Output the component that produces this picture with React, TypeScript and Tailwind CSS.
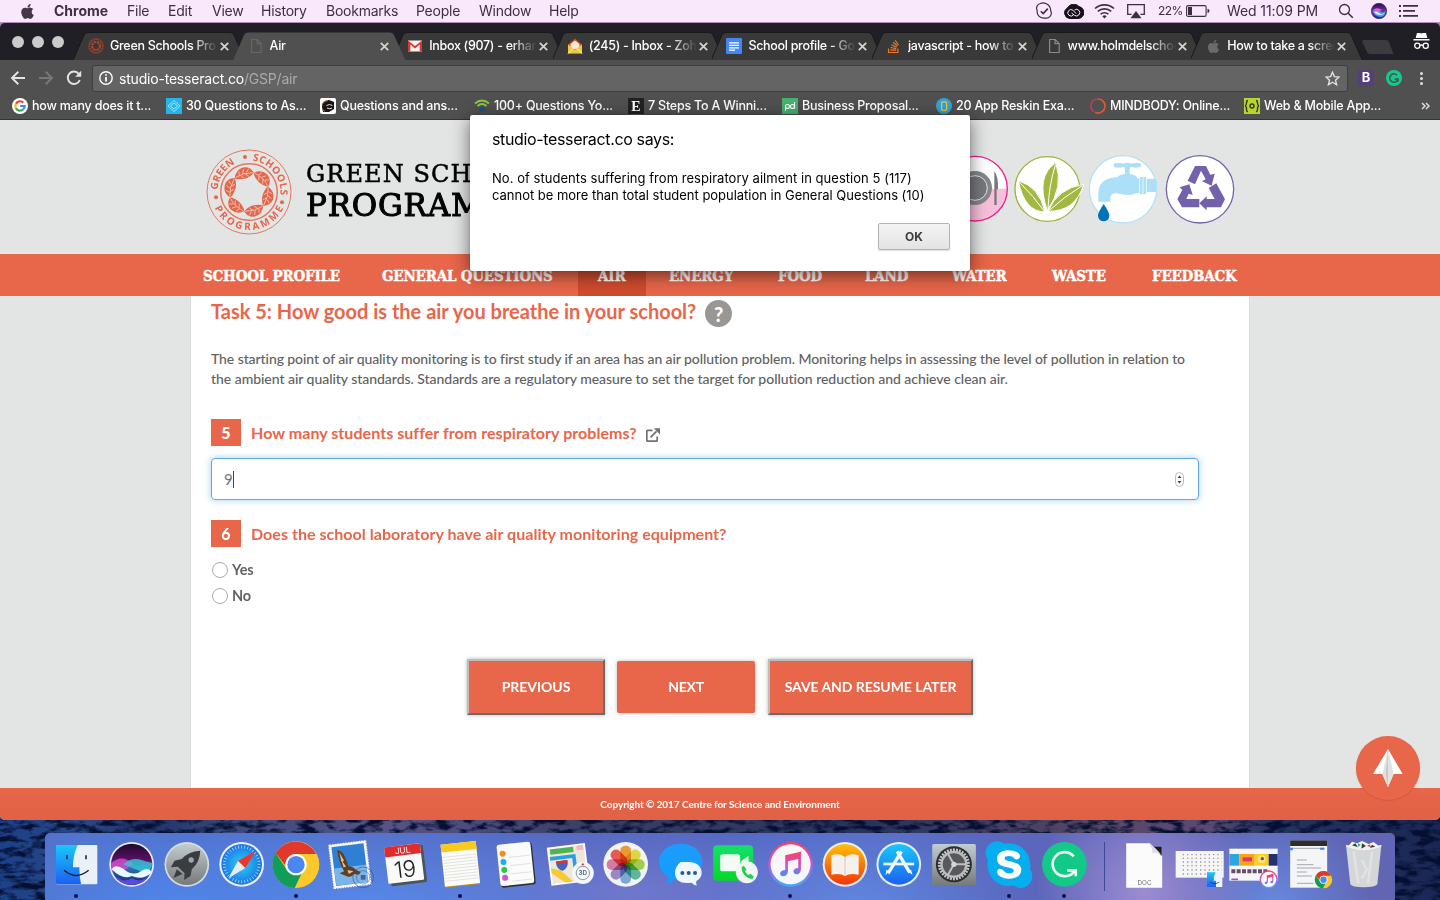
import React from "react";
import { FaApple, FaStackOverflow, FaSkype } from "react-icons/fa";

type Kids = { children?: React.ReactNode };

/* ---------- menu bar ---------- */

const menus: [string, string][] = [
  ["File", "w-[41px]"],
  ["Edit", "w-[44px]"],
  ["View", "w-[49px]"],
  ["History", "w-[65px]"],
  ["Bookmarks", "w-[90px]"],
  ["People", "w-[63px]"],
  ["Window", "w-[70px]"],
  ["Help", "w-[50px]"],
];

function MenuBar() {
  return (
    <div className="flex h-[23px] shrink-0 items-center border-b border-[#b48fbd] bg-[#f9e7fb] text-[14px] leading-[22px] text-[#3d2f41]">
      <div className="flex w-[54px] justify-center">
        <FaApple className="size-[17px] text-[#46364a]" />
      </div>
      <span className="w-[73px] font-bold">Chrome</span>
      {menus.map(([m, w]) => (
        <span key={m} className={`${w} whitespace-nowrap tracking-[-0.25px]`}>{m}</span>
      ))}
      <div className="ml-auto flex h-full items-center">
        <div className="flex w-[30px] justify-center">
          <svg width="18" height="18" viewBox="0 0 18 18" fill="none" stroke="#3d2f41" strokeWidth="1.2">
            <path d="M5.500 1.500C8-.2 15.500 1.600 15.800 9c1.800 4-1.800 8-5.800 7C4 16.600 1.600 12 2.200 8.600 .8 5.800 2 2 5.500 1.500Z" />
            <path d="M5.800 9.200l2.400 2.400 4.600-5" strokeWidth="1.600" />
          </svg>
        </div>
        <div className="flex w-[30px] justify-center">
          <svg width="20" height="15" viewBox="0 0 20 15">
            <path d="M6 14.500A5.600 5.600 0 0 1 3.500 4 7 7 0 0 1 15 2.600 6 6 0 0 1 14 14.500Z" fill="#17101a" stroke="#17101a" strokeWidth="1" />
            <g fill="none" stroke="#f9e7fb" strokeWidth="1">
              <path d="M9.500 10.800A3.200 3.200 0 1 1 9 6.300L12 9.500M7.500 9L10.500 11.300A3.300 3.300 0 1 0 10.500 6" />
            </g>
          </svg>
        </div>
        <div className="flex w-[30px] justify-center">
          <svg width="21" height="16" viewBox="0 0 21 16" fill="none" stroke="#3d2f41" strokeWidth="1.700">
            <path d="M1 5.500a14 14 0 0 1 19 0M3.800 8.400a10 10 0 0 1 13.400 0M6.600 11.200a6 6 0 0 1 7.800 0" />
            <path d="M8.300 13.200a3.500 3.500 0 0 1 4.400 0L10.500 15.500Z" fill="#3d2f41" stroke="none" />
          </svg>
        </div>
        <div className="flex w-[39px] justify-center pr-[5px]">
          <svg width="18" height="15" viewBox="0 0 18 15">
            <path d="M4.500 10.300H.7V.7h16.600v9.600h-3.800" fill="none" stroke="#3d2f41" strokeWidth="1.300" />
            <path d="M9 7l5.500 7.300h-11Z" fill="#3d2f41" />
          </svg>
        </div>
        <span className="w-[28px] text-[12px] tracking-[-0.6px]">22%</span>
        <svg width="24" height="14" viewBox="0 0 24 14" className="mr-[17px]">
          <rect x=".6" y="1.600" width="19.500" height="10.800" rx="1.500" fill="none" stroke="#3d2f41" strokeWidth="1.100" />
          <rect x="2" y="3" width="4" height="8" fill="#3d2f41" />
          <path d="M21.500 4.800q2 .6 2 2.200t-2 2.200Z" fill="#3d2f41" />
        </svg>
        <span className="w-[111px] whitespace-nowrap tracking-[-0.1px]">Wed 11:09 PM</span>
        <svg width="16" height="16" viewBox="0 0 16 16" fill="none" stroke="#3d2f41" className="mr-[17px]">
          <circle cx="6.500" cy="6.500" r="5" strokeWidth="1.300" />
          <path d="M10.200 10.200l4.600 4.600" strokeWidth="1.600" />
        </svg>
        <svg width="16" height="16" viewBox="0 0 16 16" className="mr-[12px]">
          <defs>
            <linearGradient id="siriMini" x1="0" y1="0" x2="0" y2="1">
              <stop offset="0" stopColor="#251049" />
              <stop offset=".5" stopColor="#7a2bb0" />
              <stop offset="1" stopColor="#1b2f9a" />
            </linearGradient>
          </defs>
          <circle cx="8" cy="8" r="7.700" fill="url(#siriMini)" stroke="#2c1c3c" strokeWidth=".6" />
          <path d="M1.500 8q4-3 7.500 0t5.500-.5q0 6-5 6.500Q3 13 1.500 8Z" fill="#38a7f4" />
          <path d="M3 9q3-1.500 5 1t6-.5q-2 3-5.500 2.500T3 9Z" fill="#f3eaff" />
          <path d="M2 7q4-3.500 9 0-4 2-9 0Z" fill="#e85ad0" />
        </svg>
        <svg width="19" height="14" viewBox="0 0 19 14" className="mr-[22px]" fill="#3d2f41">
          <path d="M0 1h2v2H0zM4 1h15v1.800H4zM0 6h2v2H0zM4 6h12v1.800H4zM0 11h2v2H0zM4 11h15v1.800H4z" />
        </svg>
      </div>
    </div>
  );
}

/* ---------- tabs ---------- */

const FileGlyph = ({ c }: { c: string }) => (
  <svg width="16" height="16" viewBox="0 0 16 16" fill="none" stroke={c} strokeWidth="1.200">
    <path d="M3.600 1.500h5.600l4 4v9H3.600ZM9 1.500v4.200h4.200" />
  </svg>
);

const Seal = () => (
  <svg width="16" height="16" viewBox="0 0 16 16" fill="none" stroke="#a6452f">
    <circle cx="8" cy="8" r="6.800" strokeWidth="1.700" strokeDasharray="1.300 .7" />
    <circle cx="8" cy="8" r="4" strokeWidth="2.200" strokeDasharray="2.600 .6" />
  </svg>
);

const tabs: { t: string; icon: React.ReactNode }[] = [
  { t: "Green Schools Pro", icon: <Seal /> },
  { t: "Air", icon: <FileGlyph c="#666" /> },
  {
    t: "Inbox (907) - erhar",
    icon: (
      <svg width="16" height="16" viewBox="0 0 16 16">
        <path d="M1 2.500h14v11H1z" fill="#f2f2f2" />
        <path d="M1 13.500v-11l7 5.500 7-5.500v11h-2.300V6.500L8 10.500 3.300 6.500v7Z" fill="#d6392e" />
      </svg>
    ),
  },
  {
    t: "(245) - Inbox - Zoh",
    icon: (
      <svg width="16" height="16" viewBox="0 0 16 16">
        <path d="M1 6.500L8 .5l7 6v9H1Z" fill="#c94f10" />
        <path d="M3.500 6L8 2.500 12.500 6v5h-9Z" fill="#fbe9d8" />
        <path d="M1 6.500l7 5.200 7-5.200v9H1Z" fill="#f1c83c" />
        <path d="M1 15.500l5-5M15 15.500l-5-5" stroke="#fff3bd" />
      </svg>
    ),
  },
  {
    t: "School profile - Go",
    icon: (
      <svg width="16" height="16" viewBox="0 0 16 16">
        <rect width="16" height="16" rx="1" fill="#4486f4" />
        <path d="M3 4.800h10M3 7.300h10M3 9.800h10M3 12.100h6" stroke="#fff" strokeWidth="1.300" />
      </svg>
    ),
  },
  { t: "javascript - how to", icon: <FaStackOverflow className="size-[15px] text-[#e87a2c]" /> },
  { t: "www.holmdelschoo", icon: <FileGlyph c="#8a8a8a" /> },
  { t: "How to take a scree", icon: <FaApple className="size-[15px] text-[#6b6b6b]" /> },
];

function TabStrip() {
  return (
    <div className="flex h-[37px] shrink-0 items-end rounded-t-[5px] bg-[#211f26]">
      <div className="flex h-full w-[74px] items-center gap-[8px] pl-[12px]">
        <i className="size-[12px] rounded-full bg-[#cbcbcb]" />
        <i className="size-[12px] rounded-full bg-[#cbcbcb]" />
        <i className="size-[12px] rounded-full bg-[#cbcbcb]" />
      </div>
      {tabs.map(({ t, icon }, i) => (
        <div key={t} className={`relative flex h-[28px] w-[159.600px] shrink-0 items-center pl-[14px] ${i === 1 ? "z-10" : ""}`}>
          <svg className="absolute top-0 left-0" width="172" height="28" viewBox="0 0 172 28">
            <path
              d="M-1 28.500L10 3Q11 .5 14 .5H156Q159 .5 160 3L171.500 28.500Z"
              fill={i === 1 ? "#505050" : "#393939"}
              stroke="#19181b"
              strokeWidth={i === 1 ? 0 : 1}
            />
          </svg>
          <span className="relative flex size-[16px] items-center justify-center">{icon}</span>
          <span className="relative ml-[6px] w-[108px] text-[12.500px] font-medium tracking-[-0.300px] whitespace-nowrap text-white [mask-image:linear-gradient(90deg,#000_76%,transparent_100%)]">
            {t}
          </span>
          <svg className="relative ml-[2px]" width="9" height="9" viewBox="0 0 9 9" stroke="#d6d6d6" strokeWidth="1.700">
            <path d="M.8.800l7.400 7.400M8.200.800L.8 8.200" />
          </svg>
        </div>
      ))}
      <svg width="32" height="14" viewBox="0 0 32 14" className="mb-[6px] ml-[11px]">
        <path d="M0 1.500Q0 0 2 0h22q2 0 3 2l4.500 12H8q-2 0-3-2Z" fill="#3c3b3e" />
      </svg>
      <svg width="17" height="17" viewBox="0 0 17 17" className="mb-[10px] ml-auto mr-[10px]">
        <path d="M4 0h3l1.500.6L10 0h3l1.300 5H2.700ZM.5 6h16v1.500H.5Z" fill="#fff" />
        <g fill="none" stroke="#fff" strokeWidth="1.300">
          <circle cx="4.300" cy="12.800" r="2.600" />
          <circle cx="12.700" cy="12.800" r="2.600" />
          <path d="M6.900 12.500q1.600-1 3.200 0" />
        </g>
      </svg>
    </div>
  );
}

/* ---------- toolbar and bookmarks ---------- */

function Toolbar() {
  return (
    <div className="flex h-[36px] shrink-0 items-center bg-[#505050]">
      <svg width="16" height="16" viewBox="0 0 16 16" className="ml-[10px]" fill="none" stroke="#e4e4e4" strokeWidth="1.900">
        <path d="M15 8H2.500M8.300 1.800L2 8l6.300 6.200" />
      </svg>
      <svg width="16" height="16" viewBox="0 0 16 16" className="ml-[12px]" fill="none" stroke="#787878" strokeWidth="1.900">
        <path d="M1 8h12.500M7.700 1.800L14 8l-6.300 6.200" />
      </svg>
      <svg width="16" height="16" viewBox="0 0 16 16" className="ml-[12px]" fill="none" stroke="#e4e4e4" strokeWidth="1.900">
        <path d="M13.800 10a6.200 6.200 0 1 1-1-6.200" />
        <path d="M15.200.8v6H9.200Z" fill="#e4e4e4" stroke="none" />
      </svg>
      <div className="ml-[10px] flex h-[27px] w-[1256px] items-center rounded-[3px] border border-[#3f3f3f] bg-[#646464] pl-[6px]">
        <svg width="14" height="14" viewBox="0 0 14 14" fill="none" stroke="#fff">
          <circle cx="7" cy="7" r="6.200" strokeWidth="1.400" />
          <path d="M7 6v4.500M7 3.200v1.600" strokeWidth="1.800" />
        </svg>
        <span className="ml-[6px] text-[14px] tracking-[-0.200px] text-white">
          studio-tesseract.co<span className="text-[#ababab]">/GSP/air</span>
        </span>
        <svg width="15" height="15" viewBox="0 0 24 24" className="ml-auto mr-[7px]" fill="none" stroke="#e2e2e2" strokeWidth="2.200">
          <path d="M12 2l3 7 7.500.6-5.700 5 1.800 7.400L12 18l-6.600 4 1.800-7.400-5.700-5L9 9Z" />
        </svg>
      </div>
      <span className="ml-[10px] flex size-[16px] items-center justify-center rounded-[2px] bg-[#563d7c] text-[13px] font-bold text-white">B</span>
      <svg width="16" height="16" viewBox="0 0 16 16" className="ml-[12px]">
        <circle cx="8" cy="8" r="8" fill="#15c990" />
        <path d="M11 5.200A4.200 4.200 0 1 0 12 9H8.600M12 8.800v2.900" fill="none" stroke="#43534d" strokeWidth="1.500" />
      </svg>
      <div className="ml-[18px] flex w-[4px] flex-col gap-[2px]">
        <i className="size-[3px] rounded-full bg-[#e0e0e0]" />
        <i className="size-[3px] rounded-full bg-[#e0e0e0]" />
        <i className="size-[3px] rounded-full bg-[#e0e0e0]" />
      </div>
    </div>
  );
}

const S16 = ({ children }: Kids) => (
  <svg width="16" height="16" viewBox="0 0 16 16" className="shrink-0">{children}</svg>
);

const bookmarks: [string, React.ReactNode][] = [
  ["how many does it t...", (
    <S16>
      <circle cx="8" cy="8" r="8" fill="#fff" />
      <g fill="none" strokeWidth="2.200">
        <path d="M11.300 4.600A4.700 4.700 0 0 0 3.900 5.700" stroke="#ea4335" />
        <path d="M3.900 5.700a4.700 4.700 0 0 0 0 4.600" stroke="#fbbc05" />
        <path d="M3.900 10.300a4.700 4.700 0 0 0 7.200 1.200" stroke="#34a853" />
        <path d="M11.100 11.500A4.700 4.700 0 0 0 12.700 8H8.200" stroke="#4285f4" />
      </g>
    </S16>
  )],
  ["30 Questions to As...", (
    <S16>
      <rect width="16" height="16" fill="#25b5e9" />
      <path d="M8 2.500l6 5.500-6 5.500L2 8ZM8 5l3.500 3L8 11 4.500 8Z" fill="none" stroke="#a9e6fb" strokeWidth=".9" />
    </S16>
  )],
  ["Questions and ans...", (
    <S16>
      <rect width="16" height="16" rx="2" fill="#fff" />
      <path d="M2 9Q2 2 9 2l5 2v7l-5 3H3Z" fill="#151515" />
      <path d="M2 6.500q2-4 6-4M2 11l3 2.500" stroke="#e26c1c" fill="none" />
      <path d="M6.500 7.500q3-2 6 0M7 10q3 1.500 5 0" stroke="#ddd" fill="none" />
    </S16>
  )],
  ["100+ Questions Yo...", (
    <S16>
      <path d="M1 5.500q7-6 14 0M3.500 8q4.500-4 9 0" fill="none" stroke="#8cc63f" strokeWidth="2" />
      <rect x="5.500" y="9" width="5" height="4.500" fill="#1d4f91" />
    </S16>
  )],
  ["7 Steps To A Winni...", (
    <S16>
      <rect width="16" height="16" fill="#222" />
      <text x="8" y="13" textAnchor="middle" fill="#fff" fontSize="14" fontWeight="700" fontFamily="Liberation Serif, serif">E</text>
    </S16>
  )],
  ["Business Proposal...", (
    <S16>
      <rect width="16" height="16" fill="#46b36e" />
      <g fill="none" stroke="#fff" strokeWidth="1.100">
        <circle cx="5.500" cy="8.500" r="2" />
        <path d="M3.500 8.500v4.500M12.500 4v6.500" />
        <circle cx="10.500" cy="8.500" r="2" />
      </g>
    </S16>
  )],
  ["20 App Reskin Exa...", (
    <S16>
      <circle cx="8" cy="8" r="8" fill="#37a3cd" />
      <rect x="5.600" y="3.800" width="5" height="8.500" rx="1" fill="none" stroke="#e9c84a" strokeWidth="1.300" />
    </S16>
  )],
  ["MINDBODY: Online...", (
    <S16>
      <path d="M8 1A7 7 0 0 0 4 13.800" fill="none" stroke="#b83a6b" strokeWidth="1.700" />
      <path d="M8 1a7 7 0 1 1-3 13.300" fill="none" stroke="#e4572e" strokeWidth="1.700" />
    </S16>
  )],
  ["Web & Mobile App...", (
    <S16>
      <rect width="16" height="16" fill="#b9d531" />
      <g fill="none" stroke="#333b12" strokeWidth="1.400">
        <circle cx="8" cy="8" r="2" />
        <path d="M4 2.500Q2.500 2.500 2.500 5T1 8q1.500 0 1.500 3T4 13.500M12 2.500q1.500 0 1.500 2.500T15 8q-1.500 0-1.500 3T12 13.500" />
      </g>
    </S16>
  )],
];

function Bookmarks() {
  return (
    <div className="flex h-[24px] shrink-0 items-center border-b border-[#343434] bg-[#505050] pl-[12px]">
      {bookmarks.map(([t, icon]) => (
        <div key={t} className="flex w-[154px] shrink-0 items-center gap-[4px] pb-[3px]">
          {icon}
          <span className="text-[12.500px] font-medium tracking-[-0.220px] whitespace-nowrap text-white">{t}</span>
        </div>
      ))}
      <svg width="9" height="8" viewBox="0 0 9 8" className="mb-[3px] ml-[23px]" fill="none" stroke="#ddd" strokeWidth="1.500">
        <path d="M1 1l3 3-3 3M5 1l3 3-3 3" />
      </svg>
    </div>
  );
}

/* ---------- site header ---------- */

const leafAngles = [-16, 44, 104, 164, 224, 284];

function Logo() {
  return (
    <svg width="86" height="86" viewBox="-43 -43 86 86" className="shrink-0">
      <defs>
        <path id="arcTop" d="M-31.500 0A31.500 31.500 0 0 1 31.500 0A31.500 31.500 0 0 1 -31.500 0" />
        <path id="arcTop2" d="M0 -31.500A31.500 31.500 0 0 1 0 31.500" />
        <path id="arcBottom" d="M-38 0A38 38 0 0 0 38 0" />
      </defs>
      <g fill="none" stroke="#e3795f">
        <circle r="42" strokeWidth="1" />
        <circle r="28.300" strokeWidth="1.500" />
      </g>
      <g fill="#e4674b" fontFamily="Open Sans, sans-serif" fontWeight="700" fontSize="10">
        <text><textPath href="#arcTop" startOffset="2" textLength="33">GREEN</textPath></text>
        <text><textPath href="#arcTop2" startOffset="3.500" textLength="49">SCHOOLS</textPath></text>
        <text><textPath href="#arcBottom" startOffset="16.500" textLength="86">PROGRAMME</textPath></text>
      </g>
      <g fill="#e4674b">
        <circle cx="-4" cy="-35" r="2" />
        <circle cx="-33" cy="5.300" r="2" />
        <circle cx="33" cy="10.300" r="2" />
      </g>
      {leafAngles.map((a) => (
        <g key={a} transform={`rotate(${a}) translate(0 -19.500)`}>
          <path d="M-10 2.500Q-7-5.500 1-5.800 8-5 10 2.200 5 6 -1 5.500 -7 5-10 2.500Z" fill="#e4674b" />
          <path d="M-9 2Q0-1 9 2M-5 1l1-4M-1 0l2-4M3 0l3-3M-4 1l3 3.500M1 .5l3 3.500" stroke="#f0c9bf" strokeWidth=".8" fill="none" />
        </g>
      ))}
    </svg>
  );
}

function HeaderIcons() {
  return (
    <div className="flex items-center">
      <svg width="70" height="70" viewBox="-62 42 210 210">
        <circle cx="43" cy="146" r="97" fill="#fff" />
        <path d="M-54 146H140A97 97 0 0 1-54 146Z" fill="#f7c0da" />
        <circle cx="43" cy="146" r="97" fill="none" stroke="#ec2290" strokeWidth="4" />
        <circle cx="43" cy="144" r="51" fill="#85868a" />
        <circle cx="43" cy="144" r="37" fill="#77787c" stroke="#e6e6e8" strokeWidth="3" />
        <path d="M101 94Q113 108 112 146l-4 3v46h-7Z" fill="#77787c" />
      </svg>
      <svg width="70" height="70" viewBox="157 42 210 210" className="ml-[3px] overflow-visible">
        <circle cx="260" cy="147" r="97" fill="#fff" stroke="#a2b440" strokeWidth="4" />
        <g fill="#a2b843" stroke="#fff" strokeWidth="3">
          <path d="M173 122Q236 140 253 216 191 215 173 122Z" />
          <path d="M285 68Q310 140 260 212 224 110 285 68Z" />
          <path d="M369 133Q345 215 262 214 290 145 369 133Z" />
        </g>
        <path d="M175 125Q220 170 252 215M284 75Q264 140 262 209M365 137Q310 170 265 212" fill="none" stroke="#fff" strokeWidth="3" />
      </svg>
      <svg width="70" height="70" viewBox="383 42 210 210" className="ml-[5px] overflow-visible">
        <circle cx="488" cy="148" r="101" fill="#fff" stroke="#b3e1f7" strokeWidth="4" />
        <path d="M462 70q-5 6 0 12 17 3 27-1 5-2 5 8v13q-18 2-22 10-57 1-58 49v24h36v-13q2-14 22-12 32 11 58-1v-47q-5-8-22-10V89q0-10 6-8 9 4 26 1 5-6 0-12-17-3-27 1-13-5-24 0-10-4-27-1Z" fill="#ace0f8" />
        <path d="M530 115h7v44h-7zM539 111h8v52h-8zM549 111h8v52h-8zM559 116h29q3 20-1 40h-28z" fill="#ace0f8" />
        <path d="M430 192Q447 217 447 227A17 17 0 0 1 413 227Q413 217 430 192Z" fill="#0072bb" />
      </svg>
      <svg width="70" height="70" viewBox="613 42 210 210" className="ml-[7px] overflow-visible">
        <circle cx="718" cy="148" r="101" fill="#fff" stroke="#7563ad" strokeWidth="4" />
        <g fill="#7361ab">
          <path d="M703 78H736L749 104 762 101 753 137 724 124 735 118 721 92 703 133 681 122Z" />
          <path d="M657 142L686 133 696 165 684 161 677 177H716V202H664L650 177 665 150Z" />
          <path d="M744 144L767 130 793 178 781 202H738V211L716 190 738 169V177H762Z" />
        </g>
      </svg>
    </div>
  );
}

const nav: [string, string][] = [
  ["SCHOOL PROFILE", "w-[179px]"],
  ["GENERAL QUESTIONS", "w-[216px]"],
  ["AIR", "w-[71px]"],
  ["ENERGY", "w-[109px]"],
  ["FOOD", "w-[87px]"],
  ["LAND", "w-[87px]"],
  ["WATER", "w-[100px]"],
  ["WASTE", "w-[100px]"],
  ["FEEDBACK", "w-[90px]"],
];

function SiteNav() {
  return (
    <nav className="flex h-[42px] shrink-0 items-center bg-[#e86649] pl-[203px] font-['DejaVu_Serif_Condensed','DejaVu_Serif',serif] text-[15px] font-bold tracking-[-0.200px] text-white [-webkit-text-stroke:0.4px_white] [font-stretch:condensed]">
      {nav.map(([t, w]) => (
        <span
          key={t}
          className={`${w} flex h-full items-center pt-[2px] whitespace-nowrap ${t === "AIR" ? "bg-linear-to-r from-[#cf4b2e] from-[48px] to-transparent to-[48px] shadow-[-20px_0_0_#cf4b2e]" : ""}`}
        >
          {t}
        </span>
      ))}
    </nav>
  );
}

/* ---------- form ---------- */

function Question({ n, children }: { n: string } & Kids) {
  return (
    <div className="flex h-[27px] items-center text-[16px] font-bold text-[#e86649]">
      <span className="mr-[10px] flex h-[27px] w-[30px] items-center justify-center bg-[#e86649] font-black text-white">{n}</span>
      {children}
    </div>
  );
}

function Radio({ children }: Kids) {
  return (
    <label className="flex h-[26px] items-center text-[14.500px] font-bold tracking-[-0.100px] text-[#636363]">
      <i className="mr-[4px] ml-[1px] size-[16px] rounded-full border border-[#a8a8a8] bg-white" />
      {children}
    </label>
  );
}

function Page() {
  return (
    <div className="relative flex h-[700px] shrink-0 flex-col overflow-hidden rounded-b-[5px] bg-[#e3e5e4]">
      <header className="flex h-[134px] shrink-0 items-center pt-[9px] pl-[205.500px]">
        <Logo />
        <div className="ml-[14.500px] w-[634px] pb-[4px] font-['DejaVu_Serif',serif] whitespace-nowrap text-black">
          <div className="text-[24px] leading-[31px] tracking-[1.100px] [-webkit-text-stroke:0.5px_black]">GREEN SCHOOLS</div>
          <div className="text-[31px] leading-[31px] tracking-[0.800px] [-webkit-text-stroke:1px_black]">PROGRAMME</div>
        </div>
        <div className="pb-[5px]"><HeaderIcons /></div>
      </header>
      <SiteNav />
      <main className="mx-auto flex w-[1060px] grow flex-col border-x border-[#d8dad9] bg-white pl-[20px] font-['Lato',sans-serif]">
        <div className="flex h-[35px] items-center text-[20px] font-bold tracking-[-0.010px] text-[#e86649]">
          <span className="pb-[5px]">Task 5: How good is the air you breathe in your school?</span>
          <span className="ml-[9px] flex size-[27px] items-center justify-center rounded-full bg-[#999693] text-[20px] font-black text-white">?</span>
        </div>
        <p className="mt-[18px] text-[14px] leading-[20px] font-medium whitespace-nowrap text-[#616161]">
          <span className="tracking-[-0.082px]">The starting point of air quality monitoring is to first study if an area has an air pollution problem. Monitoring helps in assessing the level of pollution in relation to</span>
          <br />
          <span className="tracking-[-0.040px]">the ambient air quality standards. Standards are a regulatory measure to set the target for pollution reduction and achieve clean air.</span>
        </p>
        <div className="mt-[30px]">
          <Question n="5">
            <span className="tracking-[0.055px]">How many students suffer from respiratory problems?</span>
            <svg width="14" height="14" viewBox="0 0 14 14" className="mt-[4px] ml-[9px]" fill="none" stroke="#707070" strokeWidth="1.700">
              <path d="M6.500 2.300H1.800q-1 0-1 1v8.900q0 1 1 1h8.400q1 0 1-1V8.500M4.500 9.300l6-6" />
              <path d="M7.800.2H14v6.200Z" fill="#707070" stroke="none" />
            </svg>
          </Question>
        </div>
        <div className="mt-[12px] flex h-[42px] w-[988px] items-center rounded-[4px] border border-[#5fa8e3] pr-[14px] pl-[12px] text-[15px] text-[#6c7280] shadow-[0_0_7px_rgba(102,175,233,0.6)]">
          9<i className="h-[17px] w-px bg-[#444]" />
          <svg width="9" height="15" viewBox="0 0 9 15" className="ml-auto">
            <rect x=".5" y=".5" width="8" height="14" rx="4" fill="#fff" stroke="#bbb" />
            <path d="M2.500 6L4.500 3.500 6.500 6ZM2.500 9L4.500 11.500 6.500 9Z" fill="#444" />
          </svg>
        </div>
        <div className="mt-[20px]">
          <Question n="6"><span className="tracking-[0.040px]">Does the school laboratory have air quality monitoring equipment?</span></Question>
        </div>
        <div className="mt-[10px]">
          <Radio>Yes</Radio>
          <Radio>No</Radio>
        </div>
        <div className="mt-[50px] ml-[256px] flex items-center text-[14px] font-bold tracking-[-0.060px] text-white">
          <div className="flex h-[56px] w-[138px] items-center justify-center border-2 border-t-[#bcbcbc] border-r-[#6b6b6b] border-b-[#6b6b6b] border-l-[#bcbcbc] bg-[#e86649] pb-[2px] shadow-[0_0_4px_rgba(0,0,0,0.3)]">PREVIOUS</div>
          <div className="ml-[12px] flex h-[52px] w-[138px] items-center justify-center rounded-[2px] bg-[#e86649] pb-[2px] tracking-[-0.250px] shadow-[0_0_4px_rgba(0,0,0,0.25)]">NEXT</div>
          <div className="ml-[13px] flex h-[56px] w-[205px] items-center justify-center border-2 border-t-[#bcbcbc] border-r-[#6b6b6b] border-b-[#6b6b6b] border-l-[#bcbcbc] bg-[#e86649] pb-[2px] shadow-[0_0_4px_rgba(0,0,0,0.3)]">SAVE AND RESUME LATER</div>
        </div>
      </main>
      <footer className="flex h-[32px] shrink-0 items-center justify-center bg-linear-to-b from-[#e86649] to-[#e06146] font-['Lato',sans-serif] text-[10px] font-bold tracking-[-0.060px] text-white">
        Copyright © 2017 Centre for Science and Environment
      </footer>
      <div className="absolute top-[616px] left-[1356px] flex size-[64px] items-center justify-center rounded-full bg-[#e86649] shadow-[0_1px_1px_rgba(190,80,55,0.500)]">
        <svg width="30" height="38" viewBox="849 86 90 114">
          <path d="M894 86L938 161H911L894 200 877 161H849Z" fill="#fff" />
          <path d="M894 86L911 161 894 200 877 161Z" fill="#e2e2e2" />
          <path d="M894 86V200L887 160Z" fill="#c9c9c9" />
        </svg>
      </div>
    </div>
  );
}

function Dialog() {
  return (
    <div className="absolute top-[115px] left-[470px] z-20 h-[156px] w-[500px] rounded-[2px] bg-white pt-[12px] pl-[22px] text-black shadow-[0_4px_18px_rgba(0,0,0,0.550),0_0_1px_rgba(0,0,0,0.600)]">
      <div className="text-[16px] leading-[24px] tracking-[-0.350px]">studio-tesseract.co says:</div>
      <div className="mt-[19px] text-[13px] leading-[17px] whitespace-nowrap">
        <span className="tracking-[0.035px]">No. of students suffering from respiratory ailment in question 5 (117)</span>
        <br />
        <span className="tracking-[-0.020px]">cannot be more than total student population in General Questions (10)</span>
      </div>
      <div className="mt-[19px] ml-[386px] flex h-[27px] w-[72px] items-center justify-center rounded-[2px] border border-[#b3b3b3] bg-linear-to-b from-[#f4f4f4] to-[#e3e3e3] text-[12px] font-bold text-[#3c3c3c] shadow-[0_1px_1px_rgba(0,0,0,0.12)]">
        OK
      </div>
    </div>
  );
}

/* ---------- dock ---------- */

const Ic = ({ x, y = 90, dot, children }: { x: number; y?: number; dot?: boolean } & Kids) => (
  <div className="flex h-full w-[54.900px] shrink-0 flex-col items-center pt-[7px]">
    <svg width="48" height="48" viewBox={`${x} ${y} 144 144`} className="shrink-0 overflow-visible">{children}</svg>
    {dot && <i className="mt-[6px] size-[4px] rounded-full bg-[#0d0e4a]" />}
  </div>
);

const ChromeMark = ({ cx, cy, r }: { cx: number; cy: number; r: number }) => (
  <g transform={`translate(${cx} ${cy}) scale(${r / 70})`}>
    <circle r="70" fill="#fcc92c" />
    <path d="M-61-35A70 70 0 0 1 61-32H0Q-30-30-30 5Z" fill="#e0382d" />
    <path d="M-61-35L-27 16Q-10 35 16 28L-4 70A70 70 0 0 1-61-35Z" fill="#109d58" />
    <circle r="32" fill="#fff" />
    <circle r="26" fill="#4b87f0" />
  </g>
);

const NoteMark = () => (
  <g>
    <path d="M15 136L62 125V179Q60 193 47 193 38 190 40 181 44 174 54 174V147L23 154V186Q20 199 7 199-2 196 0 188 4 180 15 180Z" fill="url(#noteFill)" />
  </g>
);

const petals: [number, string][] = [
  [0, "#f7941d"], [45, "#e6dc2a"], [90, "#9fd03c"], [135, "#4fb58f"],
  [180, "#6fa8dc"], [225, "#9a7fc4"], [270, "#dd6f9f"], [315, "#ee4a3d"],
];

const ticks = Array.from({ length: 36 }, (_, i) => i * 10);
const teeth = Array.from({ length: 30 }, (_, i) => i * 12);
const lines = [137, 146, 155, 164, 173, 182, 191, 200, 209];

function Dock() {
  return (
    <div className="relative flex h-[80px] shrink-0 justify-center pt-[13px]">
      <svg className="absolute -top-[10px] left-0" width="1440" height="90" viewBox="0 0 1440 90" preserveAspectRatio="none">
        <defs>
          <linearGradient id="sky" x1="0" y1="0" x2="1" y2="0">
            <stop offset="0" stopColor="#1c4188" />
            <stop offset=".06" stopColor="#2a4886" />
            <stop offset=".1" stopColor="#1d3266" />
            <stop offset=".16" stopColor="#3a4a7c" />
            <stop offset=".27" stopColor="#575385" />
            <stop offset=".34" stopColor="#4a4a7a" />
            <stop offset=".4" stopColor="#3a4066" />
            <stop offset=".6" stopColor="#27335c" />
            <stop offset=".76" stopColor="#574766" />
            <stop offset=".84" stopColor="#5a4a72" />
            <stop offset=".88" stopColor="#263560" />
            <stop offset="1" stopColor="#1a2754" />
          </linearGradient>
          <filter id="rock" x="0" y="0" width="100%" height="100%" colorInterpolationFilters="sRGB">
            <feTurbulence type="fractalNoise" baseFrequency="0.060 0.150" numOctaves="4" seed="8" />
            <feColorMatrix values="0 0 0 0 0.020  0 0 0 0 0.060  0 0 0 0 0.200  4 0 0 0 -1.700" />
          </filter>
        </defs>
        <rect width="1440" height="90" fill="url(#sky)" />
        <rect width="1440" height="90" filter="url(#rock)" />
      </svg>
      <svg width="0" height="0" className="absolute">
        <defs>
          <linearGradient id="noteFill" x1="0" y1="0" x2="0" y2="1">
            <stop offset="0" stopColor="#fb3f63" /><stop offset=".6" stopColor="#c455d6" /><stop offset="1" stopColor="#2f9df5" />
          </linearGradient>
          <linearGradient id="ringFill" x1="0" y1="0" x2="0" y2="1">
            <stop offset="0" stopColor="#ff3c5c" /><stop offset=".55" stopColor="#b65be8" /><stop offset="1" stopColor="#34b4f8" />
          </linearGradient>
          <linearGradient id="siri" x1="0" y1="0" x2="0" y2="1">
            <stop offset="0" stopColor="#21082f" /><stop offset=".4" stopColor="#591163" /><stop offset=".6" stopColor="#2d6fb0" /><stop offset="1" stopColor="#1c1b79" />
          </linearGradient>
          <linearGradient id="steel" x1="0" y1="0" x2="0" y2="1">
            <stop offset="0" stopColor="#c2cdd0" /><stop offset="1" stopColor="#77797a" />
          </linearGradient>
          <linearGradient id="blueV" x1="0" y1="0" x2="0" y2="1">
            <stop offset="0" stopColor="#18c8fb" /><stop offset="1" stopColor="#1c60f2" />
          </linearGradient>
          <linearGradient id="msgV" x1="0" y1="0" x2="0" y2="1">
            <stop offset="0" stopColor="#1d9bfb" /><stop offset="1" stopColor="#10a0ff" />
          </linearGradient>
          <linearGradient id="orangeV" x1="0" y1="0" x2="0" y2="1">
            <stop offset="0" stopColor="#ffc107" /><stop offset="1" stopColor="#f5340b" />
          </linearGradient>
          <linearGradient id="greenV" x1="0" y1="0" x2="0" y2="1">
            <stop offset="0" stopColor="#14e06b" /><stop offset="1" stopColor="#04d827" />
          </linearGradient>
          <radialGradient id="safari"><stop offset="0" stopColor="#2fd0f5" /><stop offset="1" stopColor="#1a74e4" /></radialGradient>
        </defs>
      </svg>
      <div className="relative flex h-[67px] w-[1350px] rounded-t-[5px] bg-linear-to-r from-[#536cc0] via-[#5468c3] to-[#6265b2] pl-[3.600px]">
        <div className="absolute inset-0 rounded-t-[5px] bg-[radial-gradient(ellipse_260px_130px_at_120px_80px,#4f86ea,transparent),radial-gradient(ellipse_240px_110px_at_330px_80px,#5a8aea,transparent),radial-gradient(ellipse_220px_70px_at_585px_60px,#6f78cc,transparent),radial-gradient(ellipse_180px_110px_at_810px_80px,#6088e2,transparent),radial-gradient(ellipse_110px_110px_at_1100px_60px,#9d8cd2,transparent),radial-gradient(ellipse_100px_90px_at_1230px_70px,#6688dc,transparent)]" />
        <div className="relative flex h-full">
          <Ic x={156} dot>
            <rect x="168" y="105" width="124" height="118" rx="3" fill="#eaf0f8" />
            <path d="M171 105H233Q218 138 219 172H238Q238 200 243 222H171Q168 222 168 219V108Q168 105 171 105Z" fill="url(#blueV)" />
            <path d="M201 136v12M258 136v12" stroke="#173350" strokeWidth="5" />
            <path d="M192 181Q228 212 266 181" fill="none" stroke="#17202c" strokeWidth="4" />
          </Ic>
          <Ic x={321}>
            <circle cx="395" cy="163" r="67" fill="#e9ebf0" />
            <circle cx="395" cy="163" r="62" fill="url(#siri)" />
            <path d="M333 160Q365 130 400 162 370 190 335 182Z" fill="#e04bd0" opacity=".8" />
            <path d="M370 163Q395 140 425 150T457 158Q455 190 425 185Z" fill="#35c9d8" opacity=".8" />
            <path d="M335 178Q345 160 370 176 400 202 425 182 445 170 455 187 430 213 395 198 370 212 335 178Z" fill="#e6fbff" />
            <path d="M340 192Q368 222 395 205 425 222 450 192 435 224 395 225 355 224 340 192Z" fill="#5a4be0" />
          </Ic>
          <Ic x={485.500}>
            <circle cx="560" cy="163" r="67" fill="#d8dcde" />
            <circle cx="560" cy="163" r="62" fill="url(#steel)" />
            <path d="M600 122Q564 124 545 147L523 152 512 172 533 170Q543 180 553 189L552 210 571 198 575 178Q600 155 600 122ZM530 178L520 204 547 192Z" fill="#3a3d40" />
            <circle cx="573" cy="150" r="8" fill="#9fa7aa" />
          </Ic>
          <Ic x={650}>
            <circle cx="724" cy="163" r="67" fill="#eef0f2" />
            <circle cx="724" cy="163" r="61" fill="url(#safari)" />
            {ticks.map((a) => (
              <path key={a} d="M0-57v9" stroke="#c4ecff" strokeWidth="2" transform={`translate(724 163) rotate(${a})`} />
            ))}
            <path d="M766 122L735 174 713 153Z" fill="#f2332c" />
            <path d="M684 205L735 174 713 153Z" fill="#e9ecef" />
          </Ic>
          <Ic x={815} dot><ChromeMark cx={887} cy={164} r={70} /></Ic>
          <Ic x={979.600}>
            <g transform="rotate(-7 1051 163)">
              <rect x="998" y="101" width="106" height="126" fill="#2f7fd4" stroke="#f6f6f2" strokeWidth="9" />
              <rect x="994" y="97" width="114" height="134" fill="none" stroke="#6076bd" strokeWidth="3" strokeDasharray="3 5" />
              <rect x="1003" y="170" width="96" height="52" fill="#7ab4e8" />
            </g>
            <path d="M1013 120Q1030 122 1036 140 1044 156 1046 168 1062 170 1070 180L1084 186 1078 194 1064 192Q1056 202 1046 200L1020 190 1034 184Q1018 158 1013 120Z" fill="#5f4025" />
            <path d="M1020 128l14 24-8 4ZM1026 150l14 20-8 2ZM1044 180l18 4-14 8Z" fill="#d8c49a" />
            <circle cx="1091" cy="202" r="31" fill="none" stroke="#35506f" strokeWidth="2.500" opacity=".7" />
            <circle cx="1091" cy="202" r="20" fill="none" stroke="#35506f" strokeWidth="2" opacity=".7" />
            <rect x="1084" y="195" width="14" height="14" fill="#28456f" opacity=".7" />
          </Ic>
          <Ic x={-55.650}>
            <g transform="rotate(-7 12 162)">
              <rect x="-32" y="112" width="108" height="112" rx="4" fill="#4d5356" />
              <rect x="-40" y="106" width="108" height="110" rx="3" fill="#fafafa" />
              <path d="M-40 106h108v30h-108z" fill="#e22b2d" />
              <text x="14" y="130" fill="#fff" fontSize="25" textAnchor="middle">JUL</text>
              <text x="14" y="202" fill="#222" fontSize="68" fontWeight="300" textAnchor="middle" letterSpacing="-1">19</text>
            </g>
          </Ic>
          <Ic x={109} dot>
            <g transform="rotate(-6 182 162)">
              <rect x="129" y="100" width="106" height="128" fill="#b98f25" />
              <rect x="129" y="98" width="106" height="127" fill="#fbfbf8" />
              <rect x="129" y="98" width="106" height="24" fill="#f7ca1c" />
              {lines.map((l) => <path key={l} d={`M132 ${l}h100`} stroke="#d6d6d6" strokeWidth="2" />)}
            </g>
          </Ic>
          <Ic x={273.750}>
            <g transform="rotate(-6 348 162)">
              <rect x="298" y="101" width="104" height="128" rx="8" fill="#2e3033" />
              <rect x="296" y="99" width="102" height="125" rx="8" fill="#fbfbfb" />
              <path d="M330 140h62M330 165h62M330 190h62M330 212h62" stroke="#d5d5d5" strokeWidth="2" />
              <circle cx="312" cy="127" r="9" fill="#f98b17" />
              <circle cx="312" cy="152" r="9" fill="#1badf8" />
              <circle cx="312" cy="176" r="9" fill="#2bc64a" />
              <circle cx="312" cy="200" r="9" fill="#cf53dd" />
            </g>
          </Ic>
          <Ic x={438.500}>
            <g transform="rotate(-7 506 164)">
              <rect x="450" y="108" width="110" height="110" fill="#ece7d8" stroke="#fff" strokeWidth="5" />
              <path d="M456 112h70v16h-70z" fill="#4fb353" />
              <path d="M536 110h20v14h-20z" fill="#f4b5c6" />
              <path d="M453 140h72v40" fill="none" stroke="#2b9ee8" strokeWidth="11" />
              <path d="M453 168L480 178 514 216H490L453 184Z" fill="#f5cb35" />
              <path d="M470 150h34v12q-4 14-17 18-13-4-17-18Z" fill="#3f66c4" />
              <path d="M470 150h34v7h-34z" fill="#d33" />
            </g>
            <circle cx="549" cy="189" r="33" fill="#f4f6f7" />
            <circle cx="549" cy="189" r="20" fill="none" stroke="#8a9aa6" strokeWidth="3" />
            <path d="M549 158l5 8h-10Z" fill="#e33" />
            <text x="549" y="196" fontSize="19" textAnchor="middle" fill="#55656f" fontWeight="600">3D</text>
          </Ic>
          <Ic x={603}>
            <circle cx="677" cy="163" r="67" fill="#f2f3f3" />
            {petals.map(([a, c]) => (
              <rect key={a} x="-16" y="-57" width="32" height="57" rx="15" fill={c} opacity=".88" className="mix-blend-multiply" transform={`translate(677 164) rotate(${a})`} />
            ))}
          </Ic>
          <Ic x={767.850}>
            <path d="M842 101C880 101 907 125 907 155S880 209 842 209Q830 209 822 207 813 219 797 221 806 213 806 201 777 185 777 155C777 125 805 101 842 101Z" fill="url(#msgV)" />
            <path d="M865 156C890 156 905 170 905 188 905 199 899 207 889 213Q887 220 890 227 879 224 875 218 825 224 825 188 825 170 842 156Z" fill="#eef7fd" />
            <g fill="#245a94"><circle cx="847" cy="189" r="6" /><circle cx="866" cy="189" r="6" /><circle cx="885" cy="189" r="6" /></g>
          </Ic>
          <Ic x={932.500}>
            <rect x="939" y="106" width="120" height="106" rx="12" fill="url(#greenV)" />
            <rect x="960" y="133" width="60" height="51" rx="8" fill="#f2fbf4" />
            <path d="M1023 153l22-15v42l-22-15Z" fill="#f2fbf4" />
            <circle cx="1040" cy="187" r="33" fill="#f3f5f5" />
            <path d="M1024 172l7-5 8 12-5 5q5 8 11 11l6-4 10 9-5 7Q1026 203 1024 172Z" fill="#1fd04e" />
          </Ic>
          <Ic x={-42.750} dot>
            <circle cx="31" cy="163" r="67" fill="url(#ringFill)" />
            <circle cx="31" cy="163" r="60" fill="#f7f7fa" />
            <NoteMark />
          </Ic>
          <Ic x={122}>
            <circle cx="194" cy="163" r="67" fill="#eceef0" />
            <circle cx="194" cy="163" r="61" fill="url(#orangeV)" />
            <path d="M194 142Q180 128 153 136V194Q180 188 194 198 208 188 235 194V136Q208 128 194 142Z" fill="#f6f1ec" />
            <path d="M194 142v55" stroke="#d5c9c0" strokeWidth="3" />
          </Ic>
          <Ic x={286.650}>
            <circle cx="358" cy="163" r="67" fill="#e9ecf0" />
            <circle cx="358" cy="163" r="61" fill="url(#blueV)" />
            <g fill="none" stroke="#f3f7fb" strokeWidth="10">
              <path d="M353 124L391 188M366 124L326 190" />
              <path d="M312 162h92" strokeWidth="8" />
            </g>
            <path d="M386 184l9-5 4 16ZM330 184l-9-5-3 17Z" fill="#f3f7fb" />
          </Ic>
          <Ic x={451.350}>
            <rect x="458" y="102" width="131" height="124" rx="5" fill="url(#steel)" />
            <circle cx="523" cy="163" r="54" fill="#2c2d2e" />
            {teeth.map((a) => (
              <path key={a} d="M-3-48h6v10h-6z" fill="#c3c5c6" transform={`translate(523 163) rotate(${a})`} />
            ))}
            <circle cx="523" cy="163" r="37" fill="#58595a" stroke="#b9bbbc" strokeWidth="7" />
            <path d="M523 163L505 131M523 163H560M523 163L505 195" stroke="#bfc1c2" strokeWidth="6" />
            <circle cx="523" cy="163" r="8" fill="#d5d7d8" />
          </Ic>
          <Ic x={616} dot>
            <circle cx="688" cy="164" r="50" fill="#fff" />
            <FaSkype x={608} y={84} size={160} color="#06aef0" />
          </Ic>
          <Ic x={780.750} dot>
            <circle cx="854" cy="163" r="67" fill="#12c987" />
            <path d="M882 139A36 36 0 1 0 885 182M862 181H888V199" fill="none" stroke="#eafaf3" strokeWidth="8" />
          </Ic>
          <div className="flex w-[25px] justify-center pt-[9px]"><i className="h-[49px] w-px bg-[#3f4996]" /></div>
          <Ic x={90.500} y={360}>
            <path d="M109 370H180L217 407V503H109Z" fill="#fbfbfb" />
            <path d="M188 380H215V408Z" fill="#1b1b1f" />
            <path d="M176 369Q190 385 187 399 205 396 217 408Q196 380 176 369Z" fill="#dcdcdc" />
            <text x="164" y="496" fontSize="19" textAnchor="middle" fill="#6a6a6a">DOC</text>
          </Ic>
          <Ic x={255} y={360}>
            <rect x="257" y="393" width="144" height="80" fill="#f5f5f6" />
            {[404, 415, 426, 437, 450, 462].map((l) => (
              <path key={l} d={`M278 ${l}h118`} stroke="#9b9ba0" strokeWidth="4" strokeDasharray="4 9" />
            ))}
            <rect x="351" y="457" width="46" height="44" rx="2" fill="#f0f4f8" />
            <path d="M351 457h26q-7 12-6 25h7v19h-27Z" fill="url(#blueV)" />
            <path d="M360 486q14 10 28 0" fill="none" stroke="#222" strokeWidth="2" />
          </Ic>
          <Ic x={420} y={360}>
            <rect x="418" y="386" width="145" height="96" fill="#f7f7f8" />
            <rect x="418" y="402" width="30" height="35" fill="#30a4e0" />
            <rect x="448" y="402" width="46" height="35" fill="#f8a51b" />
            <rect x="494" y="402" width="42" height="35" fill="#f7cf23" />
            <rect x="536" y="402" width="27" height="35" fill="#27306f" />
            <rect x="458" y="412" width="28" height="12" fill="#e5326c" />
            <circle cx="515" cy="418" r="12" fill="#fbe36d" />
            <circle cx="517" cy="416" r="5" fill="#7a3fa8" />
            <path d="M424 454h110" stroke="#6b4a6a" strokeWidth="12" strokeDasharray="12 4" />
            <path d="M424 478h20" stroke="#a44ad0" strokeWidth="5" />
            <circle cx="536" cy="478" r="27" fill="url(#ringFill)" />
            <circle cx="536" cy="478" r="23" fill="#fafafc" />
            <g transform="translate(524 409) scale(.42)"><NoteMark /></g>
          </Ic>
          <Ic x={584.500} y={360}>
            <rect x="600" y="361" width="111" height="142" fill="#f4f5f6" />
            <rect x="600" y="361" width="111" height="17" fill="#2b2d2f" />
            <path d="M606 385h98M620 420h30M620 434h50M620 444h72M620 456h30M620 468h45M620 490h50" stroke="#a5a8ac" strokeWidth="3" />
            <path d="M600 383h8v8h-8zM690 383h12v6h-12z" fill="#3c83ee" />
            <ChromeMark cx={700} cy={479} r={26} />
          </Ic>
          <Ic x={749} y={360}>
            <path d="M767 375L780 493Q785 502 820 502T861 493L873 375Q820 388 767 375Z" fill="#d5d6d7" />
            <path d="M790 395l14 95M845 395l-12 95M815 420l14 30-15 25" stroke="#e2e2e2" strokeWidth="8" fill="none" />
            <path d="M772 380L785 365 800 370 815 363 835 372 850 366 868 380Q820 398 772 380Z" fill="#f3f3f3" />
            <path d="M785 376l10-6 8 12ZM815 370l12 8-14 8ZM845 374l10 6-16 4Z" fill="#3b3b3d" />
            <path d="M802 370l9 4-7 6Z" fill="#28a879" />
            <path d="M830 378l9-5 3 9Z" fill="#d55733" />
            <path d="M767 377Q820 400 873 377" fill="none" stroke="#f0f0f0" strokeWidth="4" />
          </Ic>
        </div>
      </div>
    </div>
  );
}

export default function App() {
  return (
    <div className="relative flex h-[900px] w-[1440px] flex-col overflow-hidden bg-[#a57bb0] font-['Inter',sans-serif]">
      <MenuBar />
      <TabStrip />
      <Toolbar />
      <Bookmarks />
      <div className="relative z-10 flex flex-col"><Page /></div>
      <Dock />
      <Dialog />
    </div>
  );
}
